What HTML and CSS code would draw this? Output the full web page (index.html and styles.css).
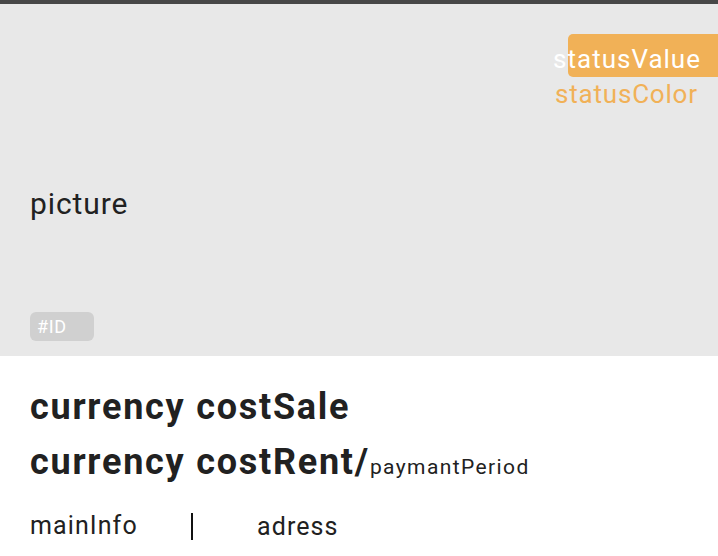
FILE: index.html
```html
<!DOCTYPE html>
<html>
<head>
<meta charset="utf-8">
<link rel="stylesheet" href="styles.css">
</head>
<body>
<div class="card">
  <div class="picture">
    <div class="picture-label">picture</div>
    <div class="id-badge">#ID</div>
    <div class="status">
      <div class="status-box"><span class="status-value">statusValue</span></div>
      <div class="status-color">statusColor</div>
    </div>
  </div>
  <div class="info">
    <div class="price">currency costSale</div>
    <div class="price">currency costRent/<span class="period">paymantPeriod</span></div>
    <div class="meta">
      <span class="main-info">mainInfo</span>
      <span class="divider"></span>
      <span class="adress">adress</span>
    </div>
  </div>
</div>
</body>
</html>
```

FILE: styles.css
```css
* { box-sizing: border-box; }
html, body { margin: 0; padding: 0; background: #ffffff; }
body { font-family: Roboto, "Noto Sans", sans-serif; color: #212121; }
.card { width: 718px; overflow: hidden; }
.picture {
  position: relative;
  height: 356px;
  border-top: 4px solid #474747;
  background: #e8e8e8;
  padding: 182px 30px 15px;
  display: flex;
  flex-direction: column;
  align-items: flex-start;
}
.picture-label { font-size: 30px; line-height: 36px; letter-spacing: 0.9px; }
.id-badge {
  margin-top: auto;
  width: 64px;
  height: 29px;
  border-radius: 6px;
  background: #d0d0d0;
  color: #ffffff;
  font-size: 18px;
  line-height: 29px;
  padding-left: 7px;
  letter-spacing: 0.6px;
}
.status {
  position: absolute;
  top: 30px;
  right: 0;
  width: 150px;
}
.status-box {
  height: 43px;
  background: #f1b157;
  border-radius: 5px 0 0 5px;
  position: relative;
}
.status-value {
  position: absolute;
  right: 17px;
  top: 4px;
  font-size: 26px;
  line-height: 43px;
  letter-spacing: 1px;
  color: #ffffff;
  white-space: nowrap;
}
.status-color {
  font-size: 26px;
  line-height: 34px;
  letter-spacing: 0.8px;
  color: #f1b157;
  margin-left: -13px;
  white-space: nowrap;
}
.info { padding: 24px 30px 0; }
.price { font-size: 36px; font-weight: 700; line-height: 55px; letter-spacing: 1.75px; white-space: nowrap; }
.period { font-size: 21px; font-weight: 400; letter-spacing: 1.4px; }
.meta { display: flex; align-items: center; margin-top: 16px; height: 30px; }
.main-info { font-size: 25px; line-height: 30px; letter-spacing: 1.1px; width: 161px; }
.divider { width: 2px; height: 27px; background: #111111; }
.adress { font-size: 25px; line-height: 30px; letter-spacing: 1.1px; margin-left: 64px; position: relative; top: 1px; }
```
